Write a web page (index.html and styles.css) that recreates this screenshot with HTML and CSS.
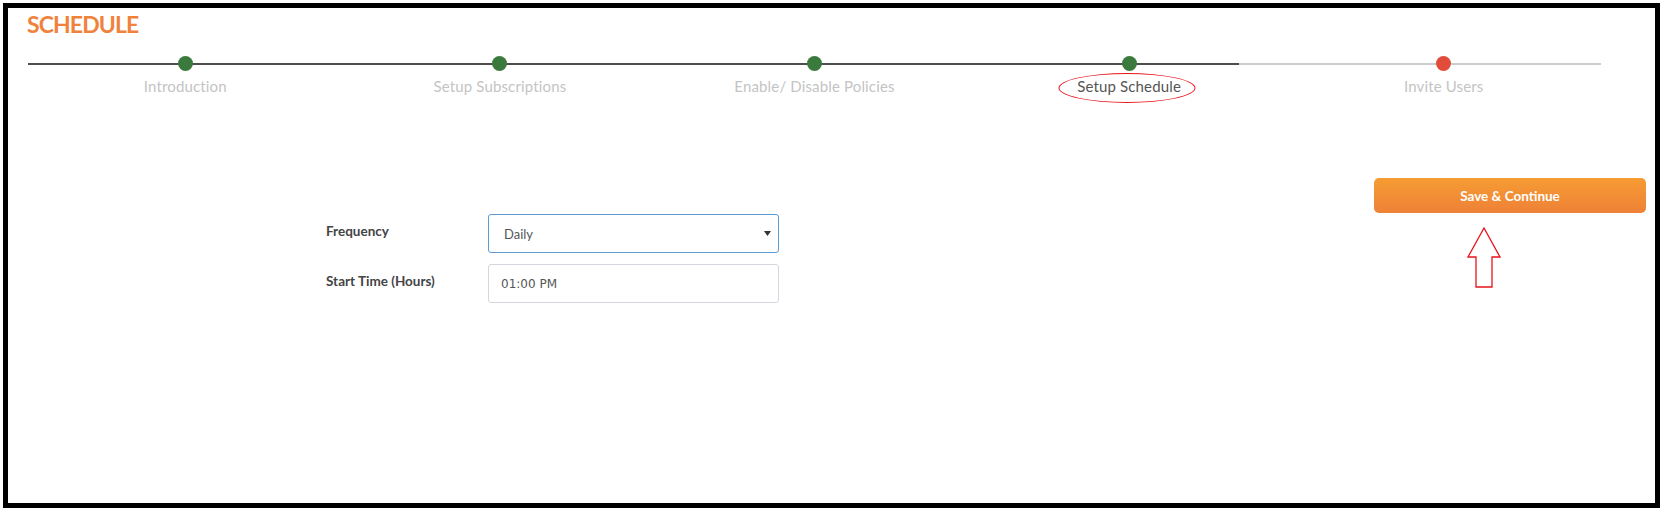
FILE: index.html
```html
<!DOCTYPE html>
<html lang="en">
<head>
<meta charset="utf-8">
<title>Schedule</title>
<link rel="stylesheet" href="styles.css">
</head>
<body>
<div class="frame">
  <h1 class="title">SCHEDULE</h1>

  <div class="stepper">
    <div class="step done"><span class="dot"></span><div class="label">Introduction</div></div>
    <div class="step done"><span class="dot"></span><div class="label">Setup Subscriptions</div></div>
    <div class="step done"><span class="dot"></span><div class="label">Enable/ Disable Policies</div></div>
    <div class="step done active"><span class="dot"></span><div class="label"><span class="ring"></span>Setup Schedule</div></div>
    <div class="step todo"><span class="dot"></span><div class="label">Invite Users</div></div>
  </div>

  <div class="main">
    <form class="form">
      <label class="field-label">Frequency</label>
      <div class="select">
        <span>Daily</span>
        <svg class="caret" width="7" height="5" viewBox="0 0 7 5"><path d="M0 0H7L3.5 5Z" fill="#333"/></svg>
      </div>
      <label class="field-label">Start Time (Hours)</label>
      <div class="input">01:00 PM</div>
    </form>

    <div class="cta">
      <button type="button" class="btn">Save &amp; Continue</button>
      <svg class="pointer" width="34" height="62" viewBox="0 0 34 62">
        <path d="M17 1 L1 30 L9 30 L9 60 L25 60 L25 30 L33 30 Z" fill="none" stroke="#e8141b" stroke-width="1.3"/>
      </svg>
    </div>
  </div>
</div>
</body>
</html>
```

FILE: styles.css
```css
* { box-sizing: border-box; }

html, body {
  margin: 0;
  padding: 0;
  background: #fff;
}

body {
  font-family: Lato, "Open Sans", Arial, sans-serif;
  color: #333;
}

.frame {
  margin: 3px 3px 5px 3px;
  height: 505px;
  border: 5px solid #000;
  background: #fff;
}

.title {
  margin: 0;
  padding: 2px 0 0 19px;
  font-size: 23px;
  line-height: 28px;
  font-weight: 700;
  letter-spacing: -0.9px;
  color: #f0823c;
}

.stepper {
  margin: 18px 0 0 20px;
  width: 1573px;
  display: grid;
  grid-template-columns: repeat(5, 1fr);
  background:
    linear-gradient(#4d4d4d, #4d4d4d) no-repeat 0 7px / 77% 2px,
    linear-gradient(#cccccc, #cccccc) no-repeat 0 7px / 100% 2px;
}

.step {
  display: flex;
  flex-direction: column;
  align-items: center;
}

.dot {
  display: block;
  width: 15px;
  height: 15px;
  border-radius: 50%;
  background: #3b7a3d;
}

.todo .dot { background: #e24c3a; }

.label {
  position: relative;
  margin-top: 5px;
  font-size: 15px;
  line-height: 20px;
  letter-spacing: 0.15px;
  color: #c4c4c4;
  white-space: nowrap;
}

.active .label { color: #555; }

.ring {
  position: absolute;
  left: 50%;
  top: 50%;
  width: 137px;
  height: 30px;
  transform: translate(calc(-50% - 2px), calc(-50% + 2px));
  border: 1px solid #e8141b;
  border-radius: 50%;
}

.main {
  display: flex;
  justify-content: space-between;
  align-items: flex-start;
  margin-top: 82px;
  padding: 0 9px 0 318px;
}

.form {
  margin: 36px 0 0 0;
  display: grid;
  grid-template-columns: 162px 291px;
  grid-auto-rows: 39px;
  row-gap: 11px;
}

.field-label {
  padding-top: 7px;
  font-size: 13.5px;
  line-height: 20px;
  font-weight: 700;
  color: #444;
}

.select,
.input {
  display: flex;
  align-items: center;
  border-radius: 3px;
  color: #555;
  background: #fff;
}

.select {
  justify-content: space-between;
  padding: 0 7px 0 15px;
  border: 1px solid #5d9cd2;
  font-size: 13px;
}

.caret { display: block; }

.input {
  padding-left: 12px;
  border: 1px solid #d6d6de;
  font-family: "DejaVu Sans", Verdana, sans-serif;
  font-size: 12px;
}

.cta {
  position: relative;
  width: 272px;
}

.btn {
  display: block;
  width: 272px;
  height: 35px;
  border: 0;
  border-radius: 5px;
  background: linear-gradient(#f69c33, #ee8137);
  color: #fff;
  font-family: Lato, "Open Sans", Arial, sans-serif;
  font-size: 13.5px;
  font-weight: 700;
  cursor: pointer;
}

.pointer {
  position: absolute;
  left: 93px;
  top: 49px;
}
```
